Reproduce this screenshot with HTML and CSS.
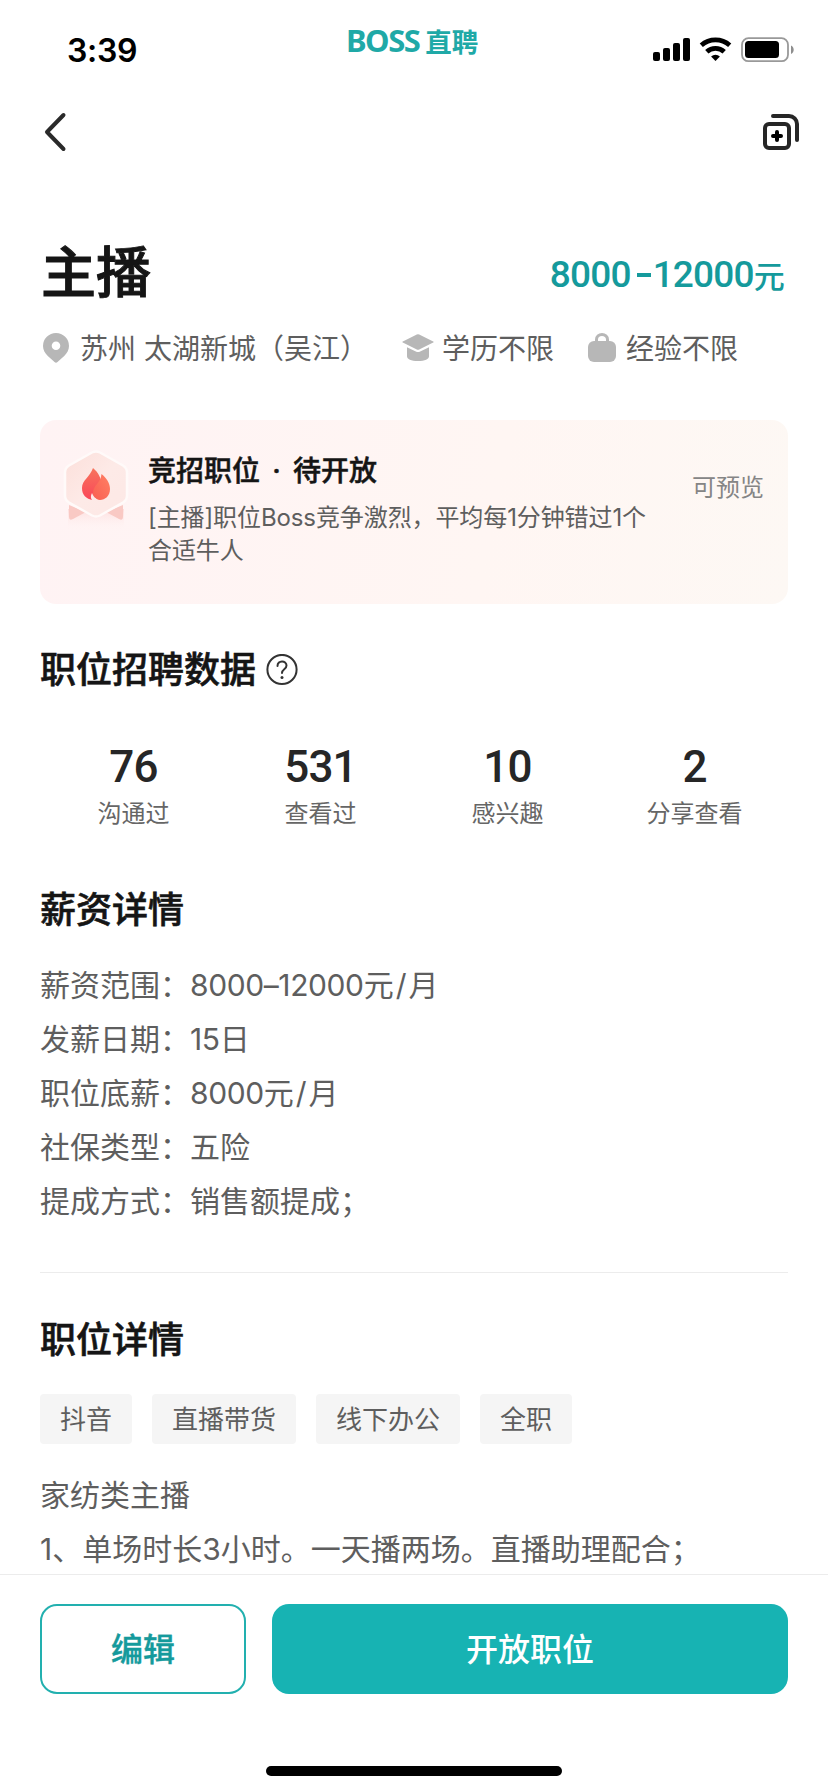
FILE: index.html
```html
<!DOCTYPE html>
<html lang="zh-CN">
<head>
<meta charset="utf-8">
<title>主播</title>
<link rel="stylesheet" href="styles.css">
</head>
<body>
<div class="screen">
  <header class="status">
    <div class="time">3:39</div>
    <div class="brand"><span class="brand-en">BOSS</span><span class="brand-cn">直聘</span></div>
    <svg class="status-icons" width="144" height="28" viewBox="0 0 144 28">
      <rect x="1" y="15" width="7" height="9" rx="2"/>
      <rect x="11" y="11" width="7" height="13" rx="2"/>
      <rect x="21" y="6" width="7" height="18" rx="2"/>
      <rect x="31" y="1" width="7" height="23" rx="2"/>
      <g fill="none" stroke="#000" stroke-width="4.800">
        <path d="M49.300 8.200a21.500 21.500 0 0 1 28.400 0"/>
        <path d="M54.800 14.800a12.800 12.800 0 0 1 17.400 0"/>
      </g>
      <path d="M63.500 24l-4.400-4.600a6.400 6.400 0 0 1 8.800 0z"/>
      <rect x="90" y="1.200" width="46" height="23" rx="6.500" fill="none" stroke="#999" stroke-width="1.800"/>
      <rect x="93" y="4" width="34" height="17" rx="3.500"/>
      <path d="M139 8.500c3.600 1.500 3.600 7 0 8.500z" fill="#8e8e8e"/>
    </svg>
  </header>

  <nav class="nav">
    <svg width="24" height="40" viewBox="0 0 24 40"><path d="M20.500 3L4 20l16.500 17" fill="none" stroke="#2a2a2a" stroke-width="4" stroke-linecap="round" stroke-linejoin="round"/></svg>
    <svg width="38" height="38" viewBox="0 0 38 38" fill="none" stroke="#262626" stroke-width="4" stroke-linecap="round">
      <rect x="3" y="11" width="24" height="24" rx="4"/>
      <path d="M11 3h16a8 8 0 0 1 8 8v16"/>
      <path d="M11 23h8M15 19v8" stroke="#000"/>
    </svg>
  </nav>

  <main class="content">
    <div class="title-row">
      <h1 class="title">主播</h1>
      <div class="salary">8000<span class="dash"></span>12000<span class="yuan">元</span></div>
    </div>

    <div class="meta">
      <svg class="pin" width="26" height="30" viewBox="0 0 26 30"><path fill="#b7b7b7" fill-rule="evenodd" d="M13 0a13 13 0 0 1 13 13c0 4-2 7-4.800 10L14.500 29a2.200 2.200 0 0 1-3 0L4.800 23C2 20 0 17 0 13A13 13 0 0 1 13 0zm0 8.500a4.300 4.300 0 1 0 0 8.600 4.300 4.300 0 0 0 0-8.600z"/></svg>
      <span class="place">苏州 太湖新城（吴江）</span>
      <svg class="cap" width="32" height="28" viewBox="0 0 32 28" fill="#b7b7b7"><path d="M14.800.400q1.200-.500 2.400 0L31.200 7.500q1 .500 0 1L17.200 15.400q-1.200.500-2.400 0L.800 8.500q-1-.500 0-1z"/><path d="M5 13.200l9.300 4.500q1.700.700 3.400 0L27 13.200v9c0 3-4 4.800-11 4.800S5 25.200 5 22.200z"/></svg>
      <span class="degree">学历不限</span>
      <svg class="bag" width="28" height="30" viewBox="0 0 28 30"><path d="M8.500 10V6.500a5.500 5 0 0 1 11 0V10" fill="none" stroke="#b7b7b7" stroke-width="3"/><rect y="8" width="28" height="21" rx="6" fill="#b7b7b7"/></svg>
      <span>经验不限</span>
    </div>

    <section class="card">
      <svg class="badge" width="76" height="92" viewBox="0 0 76 92">
        <defs>
          <linearGradient id="hex" x1="0" y1="0" x2="1" y2="1"><stop offset="0" stop-color="#fcdfda"/><stop offset=".5" stop-color="#fdeae7"/><stop offset="1" stop-color="#fde8e5"/></linearGradient>
          <linearGradient id="fire" x1="0" y1="0" x2="0" y2="1"><stop offset="0" stop-color="#f7745c"/><stop offset="1" stop-color="#fa4659"/></linearGradient>
          <linearGradient id="fire2" x1="1" y1="0" x2="0" y2="1"><stop offset="0" stop-color="#ff8064"/><stop offset="1" stop-color="#f95f52"/></linearGradient>
          <linearGradient id="glow" x1="0" y1="0" x2="0" y2="1"><stop offset="0" stop-color="#fddedd"/><stop offset="1" stop-color="#fff3f3" stop-opacity="0"/></linearGradient>
        </defs>
        <path d="M10 66h56v21H10z" fill="url(#glow)"/>
        <path d="M11 62v12q0 4 4 2l13-7zM65 62v12q0 4-4 2l-13-7z" fill="#f9c9c4"/>
        <path d="M34 9.500q4-2 8 0l23 13q4 2.500 4 7v23q0 4.500-4 7L42 72.500q-4 2-8 0L11 59.500q-4-2.500-4-7v-23q0-4.500 4-7z" fill="url(#hex)" stroke="#fffaf9" stroke-width="2.500"/>
        <path d="M35 25c6 5 8 10 8 16 0 8-4 12-8 16-7-1-11-5-11-12 0-8 8-11 11-20z" fill="url(#fire)"/>
        <path d="M43.500 31c5 4 8.500 9 8.500 15 0 7-5 11-10 11-4 0-7-3-7-7 0-8 8-10 8.500-19z" fill="url(#fire2)"/>
        <path d="M34 50c1 3 3 5 6 7h-6c-1.500-2-1.500-4 0-7z" fill="#fdeae7"/>
      </svg>
      <div class="card-body">
        <div class="card-title">竞招职位<span class="dot">·</span>待开放</div>
        <div class="card-desc">[主播]职位Boss竞争激烈，平均每1分钟错过1个<br>合适牛人</div>
      </div>
      <div class="card-side">可预览</div>
    </section>

    <h2 class="heading heading-data">职位招聘数据
      <svg width="32" height="32" viewBox="0 0 32 32" fill="none" stroke="#333" stroke-width="2"><circle cx="16" cy="15.500" r="14.600"/><path d="M11.500 12c0-6 9-6 9-.500 0 4-4.500 3.500-4.500 7.500" stroke-linecap="round"/><circle cx="16" cy="23.500" r="1.500" fill="#333" stroke="none"/></svg>
    </h2>
    <div class="stats">
      <div class="stat"><b>76</b><span>沟通过</span></div>
      <div class="stat"><b>531</b><span>查看过</span></div>
      <div class="stat"><b>10</b><span>感兴趣</span></div>
      <div class="stat"><b>2</b><span>分享查看</span></div>
    </div>

    <h2 class="heading heading-pay">薪资详情</h2>
    <div class="lines pay">
      <div>薪资范围：<span class="num">8000–12000</span>元<i class="slash">/</i>月</div>
      <div>发薪日期：<span class="num">15</span>日</div>
      <div>职位底薪：<span class="num">8000</span>元<i class="slash">/</i>月</div>
      <div>社保类型：五险</div>
      <div>提成方式：销售额提成；</div>
    </div>

    <h2 class="heading heading-job">职位详情</h2>
    <div class="tags"><span>抖音</span><span>直播带货</span><span>线下办公</span><span>全职</span></div>
    <div class="lines">
      <div>家纺类主播</div>
      <div>1、单场时长3小时。一天播两场。直播助理配合；</div>
    </div>
  </main>

  <footer class="footer">
    <div class="actions">
      <button class="btn edit">编辑</button>
      <button class="btn open">开放职位</button>
    </div>
    <div class="home"></div>
  </footer>
</div>
</body>
</html>
```
FILE: styles.css
```css
* { box-sizing: border-box; }
body {
  margin: 0;
  background: #fff;
  font-family: Inter, "Noto Sans CJK SC", sans-serif;
  color: #5e5e5e;
}
svg { display: block; flex: none; }
.screen {
  width: 828px;
  height: 1792px;
  display: flex;
  flex-direction: column;
  overflow: hidden;
}
.status {
  height: 88px;
  display: grid;
  grid-template-columns: 346px 136px 1fr;
  flex: none;
}
.time {
  padding: 31px 0 0 67px;
  font-size: 32px;
  line-height: 40px;
  font-weight: 600;
  letter-spacing: -0.3px;
  color: #000;
}
.brand {
  display: flex;
  align-items: baseline;
  gap: 6px;
  padding-top: 19px;
  line-height: 42px;
  font-weight: 700;
  color: #1fa9a7;
  white-space: nowrap;
}
.brand-en { font-family: "Noto Sans", sans-serif; font-size: 31px; letter-spacing: -1.5px; }
.brand-cn { font-size: 26.5px; }
.status-icons { margin: 37px 0 0 170px; }
.nav {
  height: 88px;
  flex: none;
  display: flex;
  justify-content: space-between;
  align-items: center;
  padding: 0 28px 0 43px;
}
.content { flex: 1; padding: 0 40px; min-height: 0; overflow: hidden; }
.title-row {
  display: flex;
  justify-content: space-between;
  align-items: center;
  height: 80px;
  margin-top: 56px;
}
.title {
  margin: 0;
  padding: 0 0 0 1px;
  font-size: 55px;
  line-height: 80px;
  font-weight: 500;
  color: #151515;
  -webkit-text-stroke: 1px #151515;
}
.salary {
  display: flex;
  align-items: center;
  font-family: Roboto, sans-serif;
  font-weight: 500;
  font-size: 37px;
  line-height: 44px;
  letter-spacing: -0.8px;
  color: #159a9c;
  padding: 5px 4px 0 0;
}
.dash { width: 14px; height: 4px; background: #159a9c; margin: 0 2px 0 6px; }
.yuan { font-family: "Noto Sans CJK SC", sans-serif; font-size: 31px; }
.meta {
  display: flex;
  align-items: center;
  height: 40px;
  margin-top: 16px;
  padding-left: 3px;
  font-size: 28px;
  line-height: 40px;
  white-space: nowrap;
}
.meta span { padding-top: 1px; }
.pin { margin-right: 11px; }
.place { width: 322px; }
.cap { margin-right: 8px; }
.degree { width: 146px; }
.bag { margin-right: 10px; }
.card {
  display: flex;
  height: 184px;
  margin-top: 52px;
  padding: 0 24px 0 18px;
  border-radius: 16px;
  background: linear-gradient(100deg, #fff3f4, #fff6f3 60%, #fdf8f4);
}
.badge { margin-top: 23px; }
.card-body { flex: 1; padding: 31px 0 0 14px; white-space: nowrap; }
.card-title {
  font-size: 28px;
  line-height: 40px;
  font-weight: 500;
  color: #151515;
  -webkit-text-stroke: 0.5px #151515;
}
.dot { display: inline-block; width: 33px; text-align: center; }
.card-desc { margin-top: 10px; font-size: 24px; line-height: 33px; letter-spacing: -0.1px; }
.card-side { padding-top: 50px; font-size: 24px; line-height: 36px; color: #858585; }
.heading {
  display: flex;
  align-items: center;
  gap: 10px;
  height: 50px;
  margin: 0;
  font-size: 36px;
  line-height: 50px;
  font-weight: 500;
  color: #151515;
  -webkit-text-stroke: 0.6px #151515;
}
.heading-data { margin-top: 41px; }
.stats { display: grid; grid-template-columns: repeat(4, 1fr); margin-top: 46px; }
.stat { display: flex; flex-direction: column; align-items: center; }
.stat b {
  font-family: Roboto, sans-serif;
  font-size: 44px;
  line-height: 52px;
  font-weight: 500;
  letter-spacing: -0.8px;
  color: #262626;
}
.stat span { margin-top: 3px; font-size: 24px; line-height: 36px; color: #666; }
.heading-pay { margin-top: 53px; }
.lines { font-size: 30px; line-height: 54px; white-space: nowrap; }
.num { letter-spacing: -0.4px; }
.pay { height: 315px; margin-top: 23px; border-bottom: 1px solid #ececec; }
.slash { font-style: normal; padding: 0 2px; }
.heading-job { margin-top: 42px; }
.tags { display: flex; gap: 20px; margin: 29px 0 24px; }
.tags span {
  height: 50px;
  padding: 1px 20px 0;
  border-radius: 4px;
  background: #f5f5f5;
  font-size: 26px;
  line-height: 50px;
}
.footer {
  height: 218px;
  flex: none;
  border-top: 1px solid #ececec;
  background: #fff;
  padding: 29px 40px 16px;
  display: flex;
  flex-direction: column;
  justify-content: space-between;
  align-items: center;
}
.actions { display: flex; gap: 26px; width: 100%; }
.btn {
  height: 90px;
  padding: 2px 0 0;
  border-radius: 17px;
  font: 500 32px/46px Inter, "Noto Sans CJK SC", sans-serif;
}
.edit { width: 206px; border: 2px solid #22b0af; background: #fff; color: #159a9c; -webkit-text-stroke: 0.4px #159a9c; }
.open { flex: 1; border: 0; background: #17b3b3; color: #fff; }
.home { width: 296px; height: 10px; border-radius: 5px; background: #000; }
```
